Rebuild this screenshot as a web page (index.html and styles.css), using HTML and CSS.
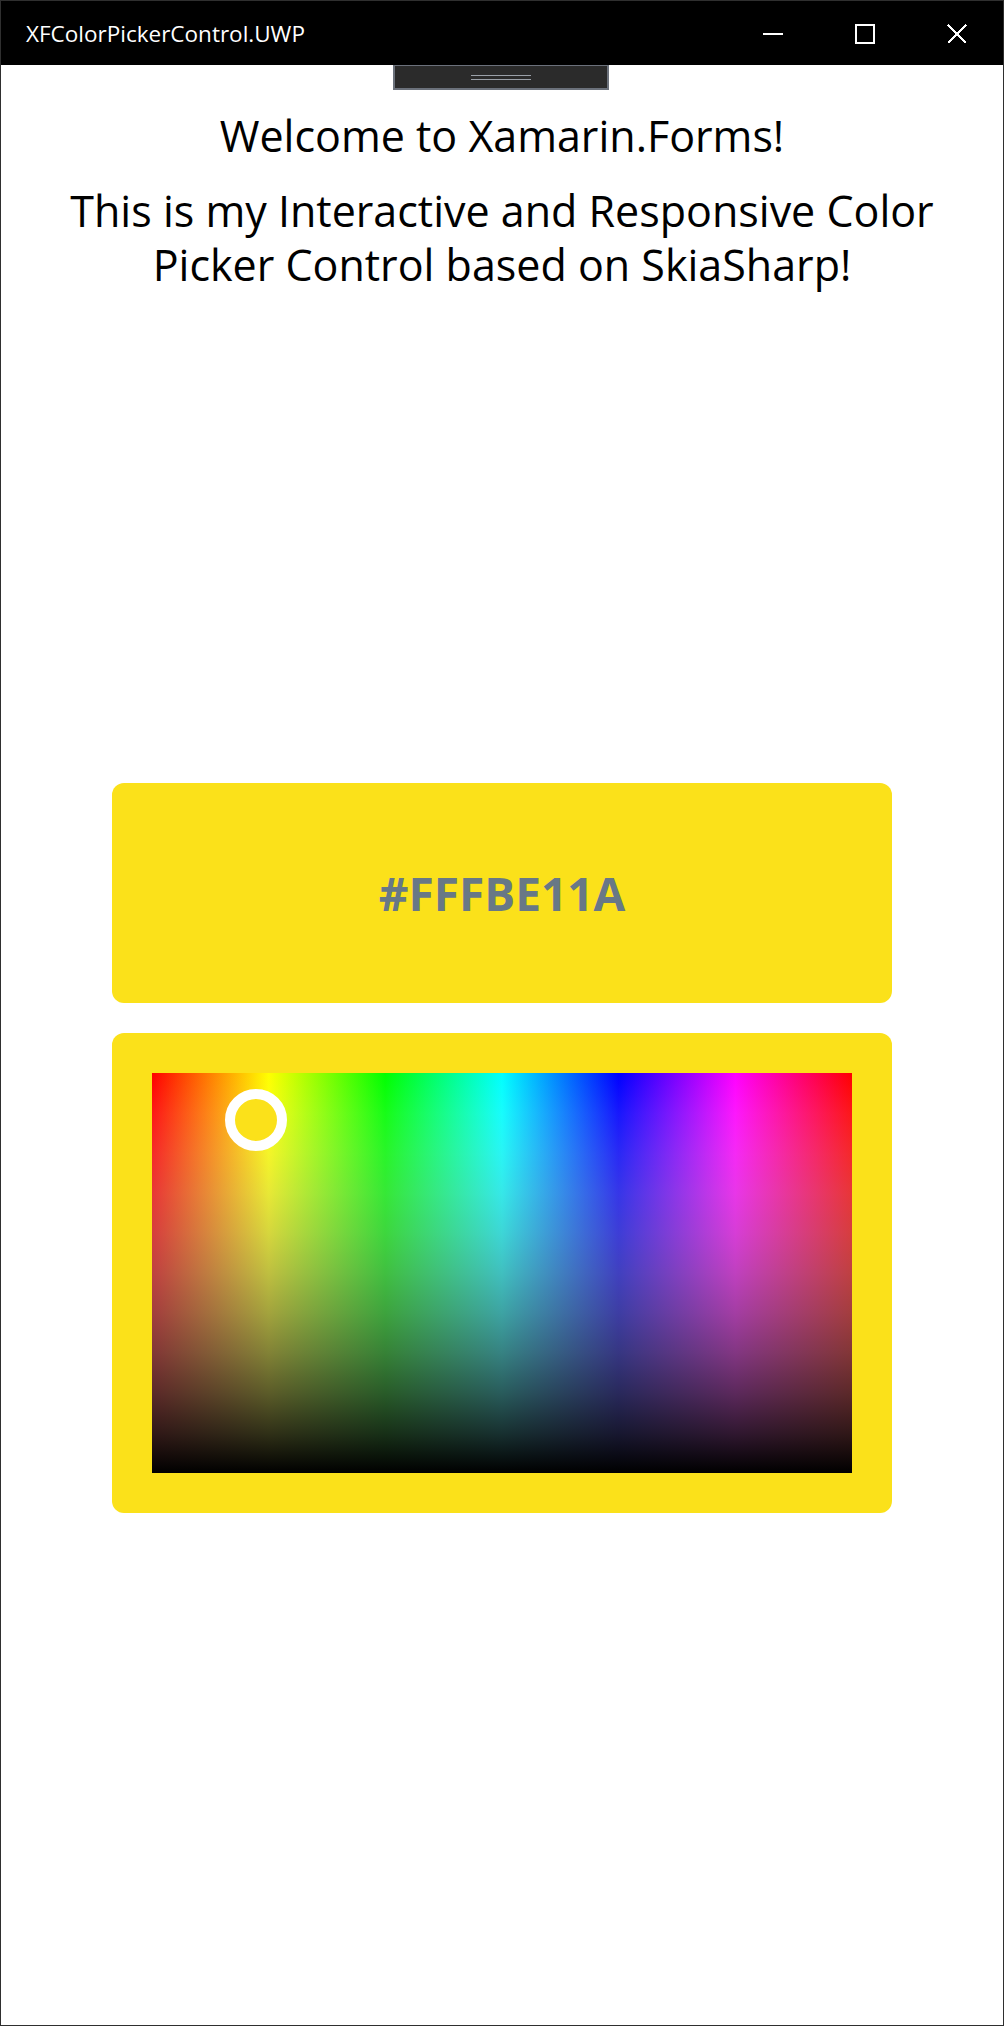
FILE: index.html
```html
<!DOCTYPE html>
<html lang="en">
<head>
<meta charset="utf-8">
<title>XFColorPickerControl.UWP</title>
<link rel="stylesheet" href="styles.css">
</head>
<body>
<div class="window">
  <header class="titlebar">
    <span class="title">XFColorPickerControl.UWP</span>
    <div class="caption-buttons">
      <div class="caption-btn">
        <svg width="20" height="20" viewBox="0 0 20 20"><line x1="0" y1="10" x2="20" y2="10" stroke="#fff" stroke-width="2"/></svg>
      </div>
      <div class="caption-btn">
        <svg width="20" height="20" viewBox="0 0 20 20"><rect x="1" y="1" width="18" height="18" fill="none" stroke="#fff" stroke-width="2"/></svg>
      </div>
      <div class="caption-btn">
        <svg width="20" height="20" viewBox="0 0 20 20"><path d="M1 1 L19 19 M19 1 L1 19" stroke="#fff" stroke-width="2" fill="none"/></svg>
      </div>
    </div>
  </header>
  <main class="content">
    <div class="debug-handle"><span class="grip"></span><span class="grip"></span></div>
    <p class="welcome">Welcome to Xamarin.Forms!</p>
    <p class="intro">This is my Interactive and Responsive Color<br>Picker Control based on SkiaSharp!</p>
    <section class="hex-card"><span class="hex">#FFFBE11A</span></section>
    <section class="picker-card">
      <div class="spectrum">
        <div class="shade"></div>
        <div class="thumb"></div>
      </div>
    </section>
  </main>
</div>
</body>
</html>
```
FILE: styles.css
```css
html, body {
  margin: 0;
  padding: 0;
  background: #ffffff;
}

.window {
  width: 1004px;
  height: 2026px;
  box-sizing: border-box;
  border: 1px solid #2f2f2f;
  display: flex;
  flex-direction: column;
  background: #ffffff;
}

.titlebar {
  height: 64px;
  flex: none;
  background: #000000;
  display: flex;
  align-items: flex-start;
  justify-content: space-between;
}

.title {
  font-family: "Open Sans", "Noto Sans", sans-serif;
  font-size: 22.5px;
  line-height: 30px;
  color: #ffffff;
  padding: 18px 0 0 25px;
}

.caption-buttons {
  display: flex;
  height: 64px;
}

.caption-btn {
  width: 92px;
  height: 64px;
  display: flex;
  align-items: center;
  justify-content: center;
}

.caption-btn svg {
  display: block;
  shape-rendering: crispEdges;
  margin-top: 2px;
}

.content {
  position: relative;
  flex: 1;
  display: flex;
  flex-direction: column;
  align-items: center;
}

.debug-handle {
  position: absolute;
  top: 0;
  left: 392px;
  width: 212px;
  height: 22px;
  background: #2b2b2b;
  border: 2px solid #6b717b;
  border-top: 1px solid #6b717b;
  display: flex;
  flex-direction: column;
  align-items: center;
  justify-content: center;
  gap: 3px;
}

.grip {
  display: block;
  width: 60px;
  height: 1px;
  background: #9aa0a8;
}

.welcome,
.intro {
  font-family: "Open Sans", "Noto Sans", sans-serif;
  font-size: 43px;
  line-height: 54px;
  color: #000000;
  text-align: center;
  margin: 0;
}

.welcome {
  margin-top: 44px;
}

.intro {
  margin-top: 21px;
}

.hex-card {
  margin-top: 491px;
  width: 780px;
  height: 220px;
  border-radius: 12px;
  background: #fbe11a;
  display: flex;
  align-items: center;
  justify-content: center;
}

.hex {
  font-family: "Open Sans", "Noto Sans", sans-serif;
  font-weight: 700;
  font-size: 46px;
  color: #687886;
}

.picker-card {
  margin-top: 30px;
  width: 780px;
  box-sizing: border-box;
  padding: 40px;
  border-radius: 12px;
  background: #fbe11a;
}

.spectrum {
  position: relative;
  width: 700px;
  height: 400px;
  background: linear-gradient(to right,
    #ff0000 0%, #ffff00 16.67%, #00ff00 33.33%, #00ffff 50%,
    #0000ff 66.67%, #ff00ff 83.33%, #ff0000 100%);
}

.shade {
  position: absolute;
  inset: 0;
  background: linear-gradient(to bottom,
    rgba(255,255,255,0) 0%,
    rgba(230,230,230,0.1) 10%,
    rgba(204,204,204,0.2) 20%,
    rgba(179,179,179,0.3) 30%,
    rgba(153,153,153,0.4) 40%,
    rgba(128,128,128,0.5) 50%,
    rgba(102,102,102,0.6) 60%,
    rgba(77,77,77,0.7) 70%,
    rgba(51,51,51,0.8) 80%,
    rgba(26,26,26,0.9) 90%,
    rgba(0,0,0,1) 100%);
}

.thumb {
  position: absolute;
  left: 73px;
  top: 16px;
  width: 42px;
  height: 42px;
  border: 10px solid #ffffff;
  border-radius: 50%;
  background: #fbe11a;
}
```
